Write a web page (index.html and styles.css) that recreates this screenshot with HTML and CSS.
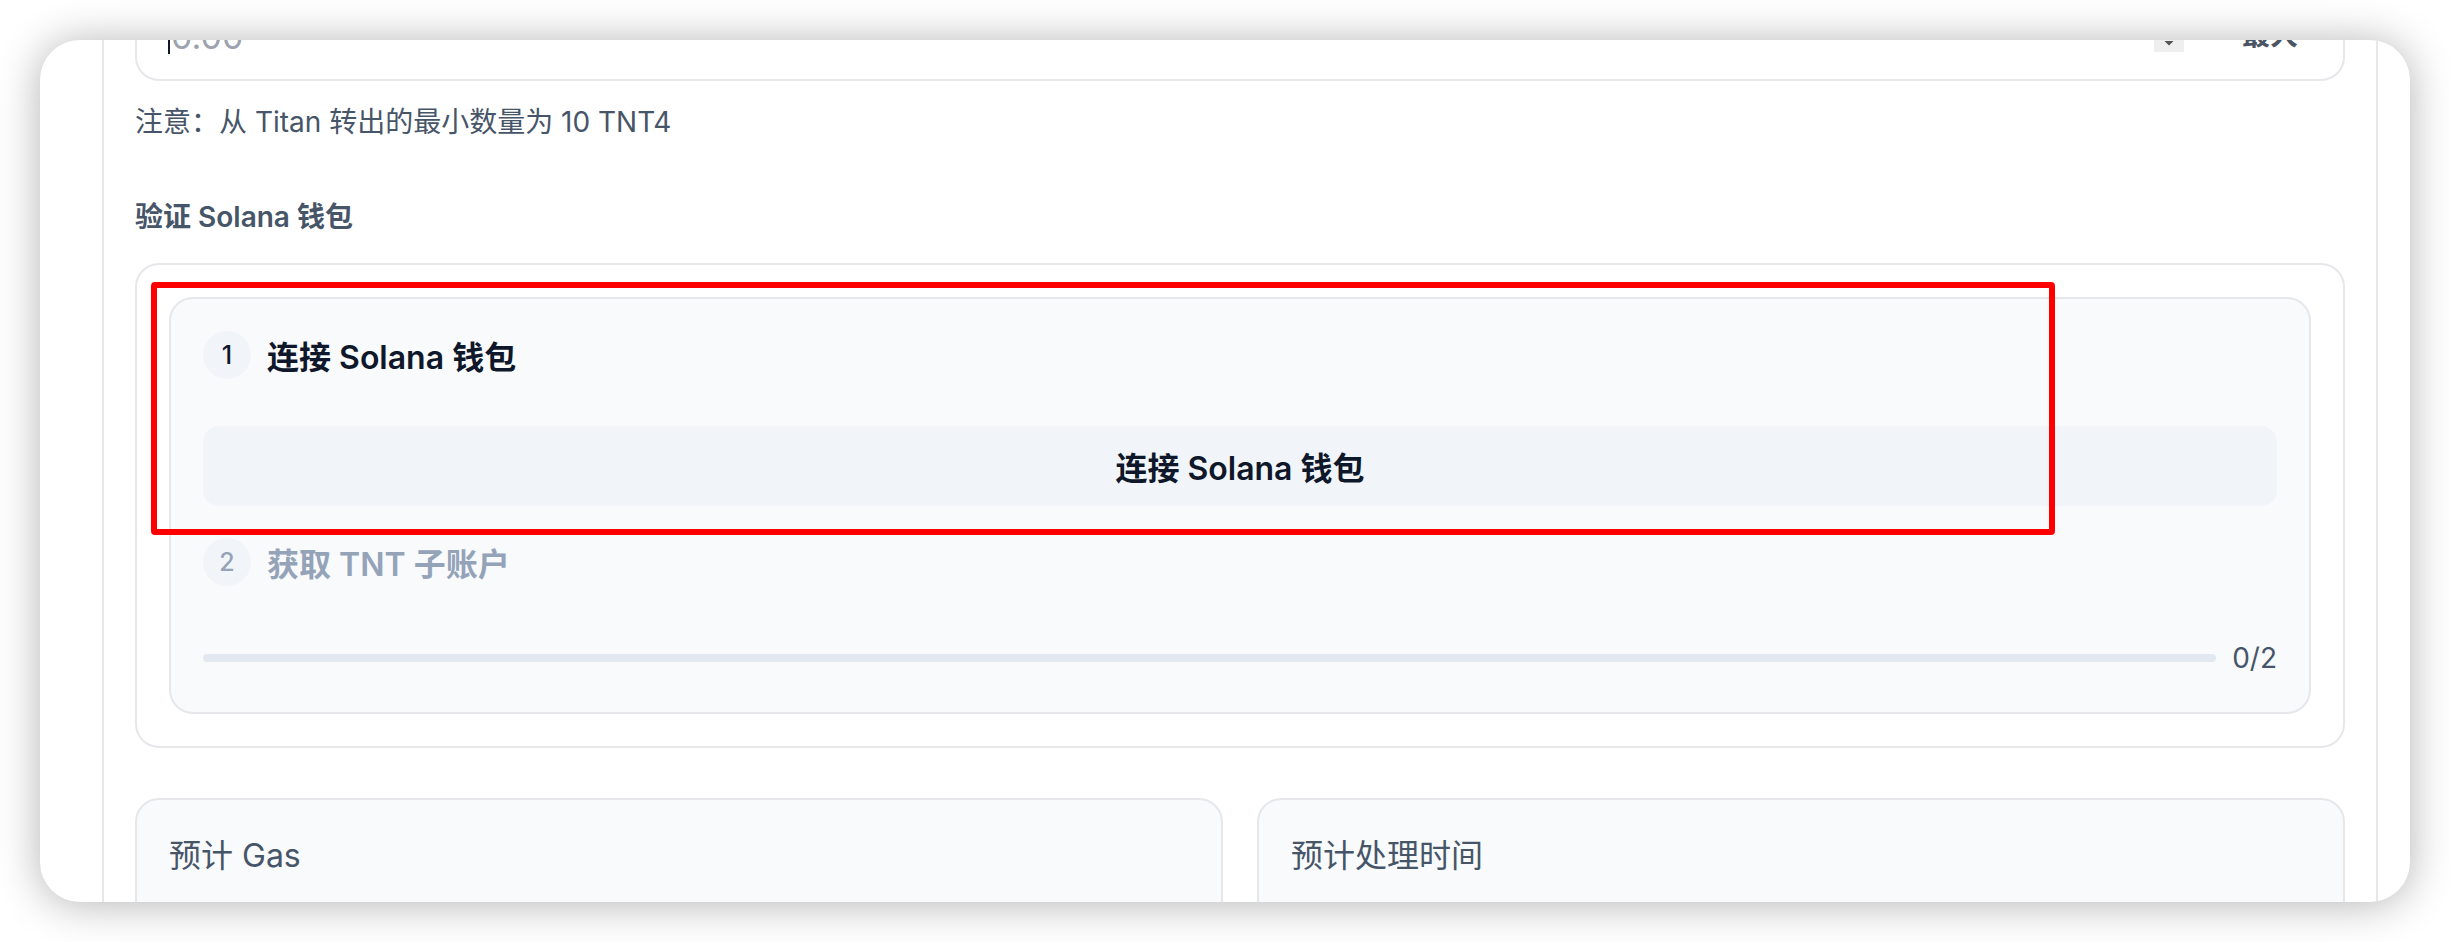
FILE: index.html
```html
<!DOCTYPE html>
<html lang="zh-CN">
<head>
<meta charset="utf-8">
<title>验证 Solana 钱包</title>
<link rel="stylesheet" href="styles.css">
</head>
<body>
<div class="window">
  <div class="panel">
    <div class="content">
      <div class="amount-input">
        <div class="amount-field">
          <span class="caret"></span><span class="placeholder">0.00</span>
        </div>
        <div class="spinner">
          <svg width="30" height="38" viewBox="0 0 30 38"><polygon points="10.5,11 19.5,11 15,6.5" fill="#555"/><polygon points="10.5,27 19.5,27 15,31.5" fill="#555"/></svg>
        </div>
        <div class="max-btn">最大</div>
      </div>
      <p class="note">注意：从 Titan 转出的最小数量为 10 TNT4</p>
      <p class="section-label">验证 Solana 钱包</p>
      <div class="verify-card">
        <div class="steps">
          <div class="step">
            <div class="step-head">
              <span class="step-num">1</span>
              <span class="step-title">连接 Solana 钱包</span>
            </div>
            <div class="step-action">连接 Solana 钱包</div>
          </div>
          <div class="step step-disabled">
            <div class="step-head">
              <span class="step-num">2</span>
              <span class="step-title">获取 TNT 子账户</span>
            </div>
          </div>
          <div class="progress-row">
            <div class="progress-track"><div class="progress-fill" style="width:0%"></div></div>
            <span class="progress-text">0/2</span>
          </div>
        </div>
        <div class="highlight"></div>
      </div>
      <div class="stats">
        <div class="stat-card">
          <div class="stat-title">预计 Gas</div>
        </div>
        <div class="stat-card">
          <div class="stat-title">预计处理时间</div>
          <div class="stat-sub">约 1 分钟</div>
        </div>
      </div>
    </div>
  </div>
</div>
</body>
</html>
```

FILE: styles.css
```css
* { box-sizing: border-box; }

html, body {
  margin: 0;
  padding: 0;
  background: #ffffff;
}

body {
  width: 2450px;
  height: 942px;
  overflow: hidden;
  font-family: Inter, "Noto Sans CJK SC", "Noto Sans", sans-serif;
  color: #0f172a;
}

.window {
  margin: 40px;
  width: 2370px;
  height: 862px;
  border-radius: 40px;
  overflow: hidden;
  background: #ffffff;
  box-shadow: 0 2px 44px rgba(0, 0, 0, 0.30);
}

.panel {
  margin-left: 62px;
  margin-right: 32px;
  height: 100%;
  border-left: 2px solid #e5e7eb;
  border-right: 2px solid #e5e7eb;
  padding: 0 31px;
  overflow: hidden;
}

.content {
  margin-top: -55px;
}

/* amount input (scrolled partially out of view) */
.amount-input {
  height: 96px;
  border: 2px solid #e5e7eb;
  border-radius: 24px;
  display: flex;
  align-items: center;
  padding: 0 45px 0 31px;
  background: #fff;
}

.amount-field {
  flex: 1;
  display: flex;
  align-items: center;
}

.caret {
  width: 2px;
  height: 38px;
  background: #0f172a;
  margin-right: 1px;
  position: relative;
  top: 2px;
}

.placeholder {
  font-size: 34px;
  color: #9ca3af;
  padding-top: 6px;
}

.spinner {
  width: 30px;
  height: 38px;
  background: #efefef;
  display: flex;
}

.max-btn {
  margin-left: 58px;
  font-size: 28px;
  font-weight: 600;
  color: #4b5563;
}

.note {
  margin: 21px 0 0;
  font-size: 28px;
  line-height: 40px;
  color: #475569;
}

.section-label {
  margin: 55px 0 0;
  font-size: 28px;
  line-height: 40px;
  font-weight: 600;
  color: #475569;
}

.verify-card {
  position: relative;
  margin-top: 26px;
  border: 2px solid #e5e7eb;
  border-radius: 24px;
  padding: 32px;
  background: #fff;
}

.steps {
  border: 2px solid #e5e7eb;
  border-radius: 24px;
  background: #f8fafc;
  padding: 32px;
}

.step-head {
  display: flex;
  align-items: center;
  gap: 16px;
  height: 48px;
}

.step-num {
  width: 48px;
  height: 48px;
  border-radius: 50%;
  background: #f1f5f9;
  display: flex;
  align-items: center;
  justify-content: center;
  font-size: 25px;
  font-weight: 500;
  color: #0f172a;
}

.step-title {
  font-size: 32px;
  font-weight: 600;
  color: #0f172a;
}

.step-action {
  margin-top: 47px;
  height: 80px;
  border-radius: 16px;
  background: #f1f5f9;
  display: flex;
  align-items: center;
  justify-content: center;
  font-size: 32px;
  font-weight: 600;
  color: #0f172a;
}

.step + .step {
  margin-top: 32px;
}

.step-disabled .step-num,
.step-disabled .step-title {
  color: #94a3b8;
}

.progress-row {
  margin-top: 50px;
  height: 44px;
  display: flex;
  align-items: center;
  gap: 16px;
}

.progress-track {
  flex: 1;
  height: 8px;
  border-radius: 4px;
  background: #e2e8f0;
  overflow: hidden;
}

.progress-fill {
  height: 100%;
  background: #0f172a;
}

.progress-text {
  font-size: 28px;
  line-height: 40px;
  color: #475569;
}

/* annotation overlay */
.highlight {
  position: absolute;
  left: 14px;
  top: 17px;
  width: 1904px;
  height: 253px;
  border: 6px solid #ff0000;
  border-radius: 4px;
  pointer-events: none;
}

.stats {
  margin-top: 50px;
  display: grid;
  grid-template-columns: 1fr 1fr;
  gap: 34px;
}

.stat-card {
  border: 2px solid #e5e7eb;
  border-radius: 24px;
  background: #f8fafc;
  padding: 32px;
  height: 300px;
}

.stat-title {
  font-size: 32px;
  line-height: 48px;
  color: #475569;
}

.stat-sub {
  margin-top: 22px;
  font-size: 28px;
  line-height: 40px;
  color: #cbd5e1;
}
```
